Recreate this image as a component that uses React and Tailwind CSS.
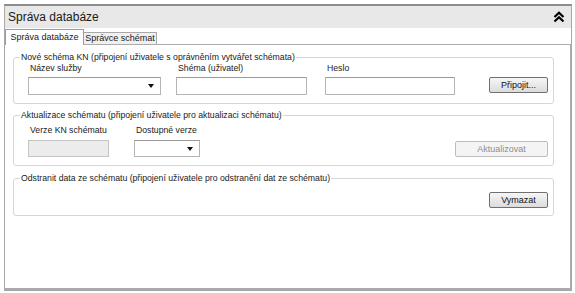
import { useState } from 'react';

const font = { fontFamily: '"Liberation Sans", Arial, sans-serif' };

const btnClass =
  'h-[16px] rounded-[2px] border border-[#707070] bg-gradient-to-b from-[#f6f6f6] to-[#dcdcdc] text-[9px] text-[#111] leading-none';
const btnDisabledClass =
  'h-[16px] rounded-[2px] border border-[#bdbdbd] bg-[#f4f4f4] text-[9px] text-[#8d8d8d] leading-none';
const inputClass = 'h-[18px] border border-[#b5b5b5] border-t-[#9a9a9a] bg-white';

function Combo({ width, height = 18 }) {
  return (
    <div
      className={`${inputClass} relative flex items-center justify-end pr-[6px]`}
      style={{ width, height }}
    >
      <svg width="6" height="4" viewBox="0 0 6 4">
        <path d="M0 0 L6 0 L3 4 Z" fill="#111" />
      </svg>
    </div>
  );
}

function Group({ title, height, className = '', children }) {
  return (
    <div
      className={`relative rounded-[3px] border border-[#d6d6d6] ${className}`}
      style={{ height }}
    >
      <span className="absolute -top-[6px] left-[6px] bg-white px-[1px] text-[8.7px] leading-[11px] text-[#1a1a1a]">
        {title}
      </span>
      {children}
    </div>
  );
}

function Field({ label, children, labelClass = '' }) {
  return (
    <div className="flex flex-col">
      <span className={`text-[8.7px] leading-[11px] text-[#1a1a1a] pl-[2px] ${labelClass}`}>{label}</span>
      {children}
    </div>
  );
}

export default function App() {
  const [tab, setTab] = useState(0);

  return (
    <div className="w-[575px] h-[293px] bg-white pt-[4px] pl-[4px] pr-[3px]" style={font}>
      <div className="h-[287px] border border-[#a8a8a8] border-t-2 border-t-[#8c8c8c] border-b-2 flex flex-col">
        <div className="h-[22px] bg-[#e8e8e8] flex items-center justify-between pl-[3px] pr-[6px]">
          <span className="text-[12px] text-[#1a1a1a]">Správa databáze</span>
          <svg width="12" height="12" viewBox="0 0 12 12">
            <path d="M1.5 6 L6 1.8 L10.5 6 M1.5 10.5 L6 6.3 L10.5 10.5" fill="none" stroke="#000" strokeWidth="2.2" />
          </svg>
        </div>

        <div className="h-[15px] flex items-end mt-[1px]">
          <button
            type="button"
            onClick={() => setTab(0)}
            className={`relative z-10 h-[15px] w-[79px] border border-b-0 border-[#9c9c9c] bg-white text-[9px] text-[#1a1a1a] leading-none ${tab === 0 ? '-mb-px h-[16px]' : ''}`}
          >
            Správa databáze
          </button>
          <button
            type="button"
            onClick={() => setTab(1)}
            className="h-[12px] w-[73px] border border-b-0 border-l-0 border-[#a8a8a8] bg-[#f0f0f0] text-[9px] text-[#1a1a1a] leading-none"
          >
            Správce schémat
          </button>
        </div>

        <div className="flex-1 border-t border-r border-b border-[#acacac] pl-[8px] pr-[16px] pt-[12px]">
          <Group title="Nové schéma KN (připojení uživatele s oprávněním vytvářet schémata)" height={47}>
            <div className="flex items-end pl-[14px] pr-[5px] pt-[5px]">
              <Field label="Název služby" labelClass="mb-[3px]">
                <Combo width={133} />
              </Field>
              <div className="ml-[15px]">
                <Field label="Shéma (uživatel)" labelClass="mb-[3px]">
                  <div className={inputClass} style={{ width: 131 }} />
                </Field>
              </div>
              <div className="ml-[18px]">
                <Field label="Heslo" labelClass="mb-[3px]">
                  <div className={inputClass} style={{ width: 130 }} />
                </Field>
              </div>
              <button type="button" className={`${btnClass} ml-auto mb-[2px] w-[59px]`}>
                Připojit...
              </button>
            </div>
          </Group>

          <Group title="Aktualizace schématu (připojení uživatele pro aktualizaci schématu)" height={51} className="mt-[11px]">
            <div className="flex items-end pl-[14px] pr-[5px] pt-[9px]">
              <Field label="Verze KN schématu" labelClass="mb-[4px]">
                <div className="h-[17px] w-[81px] border border-[#c4c4c4] bg-[#ececec]" />
              </Field>
              <div className="ml-[25px]">
                <Field label="Dostupné verze" labelClass="mb-[4px]">
                  <Combo width={66} height={17} />
                </Field>
              </div>
              <button type="button" disabled className={`${btnDisabledClass} ml-auto w-[93px]`}>
                Aktualizovat
              </button>
            </div>
          </Group>

          <Group title="Odstranit data ze schématu (připojení uživatele pro odstranění dat ze schématu)" height={38} className="mt-[12px]">
            <div className="flex justify-end pr-[5px] pt-[13px]">
              <button type="button" className={`${btnClass} w-[59px]`}>
                Vymazat
              </button>
            </div>
          </Group>
        </div>
      </div>
    </div>
  );
}
